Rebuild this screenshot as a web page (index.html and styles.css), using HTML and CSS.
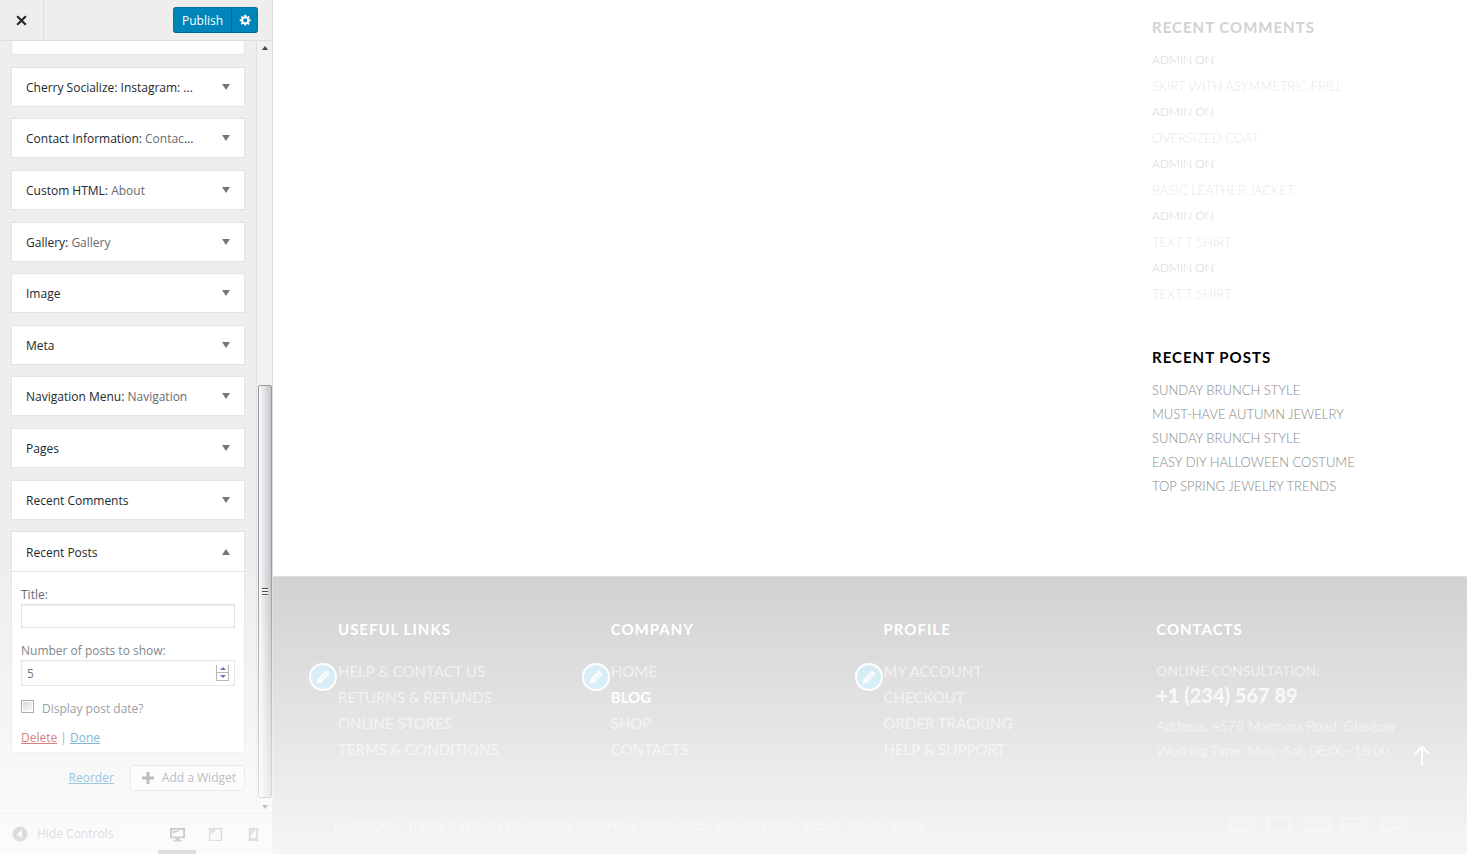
FILE: index.html
```
<!DOCTYPE html>
<html lang="en">
<head>
<meta charset="utf-8">
<title>Customize: Widgets</title>
<link rel="stylesheet" href="styles.css">
</head>
<body>
<svg class="defs" aria-hidden="true">
  <symbol id="pencil" viewBox="0 0 20 20"><path fill="currentColor" d="M13.9 3.4l2.8 2.8c.4.4.4.9 0 1.300l-8.500 8.500-4.900 1 .9-4.900 8.500-8.700c.4-.4.8-.4 1.200 0z"/><path fill="none" stroke="#c6e6f4" stroke-width="1" d="M6.500 12.500l6-6M8 14l6-6M11.800 5.200l3 3"/></symbol>
</svg>
<div class="app">
  <aside class="controls">
    <header class="controls-head">
      <button class="close" aria-label="Close"><svg viewBox="0 0 12 12"><path d="M2 2l8 8M10 2l-8 8"/></svg></button>
      <div class="publish">
        <button class="publish-main">Publish</button>
        <button class="publish-gear" aria-label="Publish settings"><svg viewBox="0 0 20 20"><path fill-rule="evenodd" d="M18 12h-2.200c-.1.500-.3.900-.6 1.300l1.600 1.600-2.100 2.100-1.600-1.600c-.4.200-.8.400-1.300.5V18H8.800v-2.200c-.500-.1-.9-.3-1.300-.5l-1.600 1.600-2.100-2.100 1.600-1.600c-.2-.4-.4-.8-.5-1.300H2.500V9h2.400c.1-.500.3-.9.500-1.300L3.800 6.100 5.900 4l1.600 1.600c.4-.2.8-.4 1.300-.5V2.500h3v2.600c.500.1.9.3 1.300.5L14.700 4l2.100 2.100-1.600 1.600c.2.4.4.8.5 1.300H18zM10.300 13.500a3 3 0 1 0 0-6 3 3 0 0 0 0 6z"/></svg></button>
      </div>
    </header>
    <div class="controls-body">
      <div class="widgets">
        <div class="widget-cut"></div>
        <button class="widget"><span class="name">Cherry Socialize: Instagram: ...</span><i class="caret"></i></button>
        <button class="widget"><span class="name">Contact Information: <span class="sub">Contac</span>...</span><i class="caret"></i></button>
        <button class="widget"><span class="name">Custom HTML: <span class="sub">About</span></span><i class="caret"></i></button>
        <button class="widget"><span class="name">Gallery: <span class="sub">Gallery</span></span><i class="caret"></i></button>
        <button class="widget"><span class="name">Image</span><i class="caret"></i></button>
        <button class="widget"><span class="name">Meta</span><i class="caret"></i></button>
        <button class="widget"><span class="name">Navigation Menu: <span class="sub">Navigation</span></span><i class="caret"></i></button>
        <button class="widget"><span class="name">Pages</span><i class="caret"></i></button>
        <button class="widget"><span class="name">Recent Comments</span><i class="caret"></i></button>
        <section class="widget-open">
          <button class="widget"><span class="name">Recent Posts</span><i class="caret up"></i></button>
          <form class="widget-form">
            <label for="title">Title:</label>
            <input class="field" id="title" type="text">
            <label for="count" class="spaced">Number of posts to show:</label>
            <div class="number">
              <input class="field" id="count" type="text" inputmode="numeric" value="5">
              <span class="spinner"><button type="button" aria-label="Increase"><i></i></button><button type="button" aria-label="Decrease"><i class="down"></i></button></span>
            </div>
            <div class="check"><input type="checkbox" id="date"><label for="date">Display post date?</label></div>
            <p class="links"><a class="delete" href="#">Delete</a> | <a href="#">Done</a></p>
          </form>
        </section>
        <div class="actions">
          <a href="#">Reorder</a>
          <button class="add"><svg viewBox="0 0 12 12"><path d="M6 0v12M0 6h12"/></svg>Add a Widget</button>
        </div>
      </div>
      <div class="scrollbar" aria-hidden="true"><i class="arrow"></i><div class="thumb"><span></span></div><i class="arrow down"></i></div>
    </div>
    <footer class="controls-foot">
      <button class="hide"><svg viewBox="0 0 16 16"><circle cx="8" cy="8" r="7.500"/><path d="M10 4v8L4.500 8z"/></svg>Hide Controls</button>
      <div class="devices">
        <button class="active" aria-label="Desktop"><svg viewBox="0 0 16 16"><path fill-rule="evenodd" d="M0 1h16v11H10v2h3v1.500H3V14h3v-2H0zM2 3v7h12V3z"/><path d="M3 4h8L3 7z"/></svg></button>
        <button aria-label="Tablet"><svg viewBox="0 0 16 16"><path fill-rule="evenodd" d="M1 1h14v14H1zM2.500 2.500v11h11v-11z"/><path d="M3 3h6L3 8z"/></svg></button>
        <button aria-label="Mobile"><svg viewBox="0 0 16 16"><path fill-rule="evenodd" d="M3 1h10v14H3zM5 3v9h6V3z"/><path d="M5.500 3.500h4L5.500 9z"/></svg></button>
      </div>
    </footer>
  </aside>

  <main class="preview">
    <div class="page">
      <div class="side">
        <section class="comments">
          <h2>Recent Comments</h2>
          <ul>
            <li>Admin on <a href="#">Skirt with asymmetric frill</a></li>
            <li>Admin on <a href="#">Oversized coat</a></li>
            <li>Admin on <a href="#">Basic leather jacket</a></li>
            <li>Admin on <a href="#">Text T Shirt</a></li>
            <li>Admin on <a href="#">Text T Shirt</a></li>
          </ul>
        </section>
        <section class="posts">
          <h2>Recent Posts</h2>
          <ul>
            <li><a href="#">Sunday brunch style</a></li>
            <li><a href="#">Must-have autumn jewelry</a></li>
            <li><a href="#">Sunday brunch style</a></li>
            <li><a href="#">Easy DIY Halloween costume</a></li>
            <li><a href="#">Top spring jewelry trends</a></li>
          </ul>
        </section>
      </div>
    </div>
    <footer class="site-foot">
      <div class="columns">
        <section>
          <h2>Useful links</h2>
          <nav><button class="edit" aria-label="Edit menu"><svg><use href="#pencil"/></svg></button>
            <a href="#">Help &amp; Contact us</a><a href="#">Returns &amp; Refunds</a><a href="#">Online stores</a><a href="#">Terms &amp; Conditions</a></nav>
        </section>
        <section>
          <h2>Company</h2>
          <nav><button class="edit" aria-label="Edit menu"><svg><use href="#pencil"/></svg></button>
            <a href="#">Home</a><a href="#" class="current">Blog</a><a href="#">Shop</a><a href="#">Contacts</a></nav>
        </section>
        <section>
          <h2>Profile</h2>
          <nav><button class="edit" aria-label="Edit menu"><svg><use href="#pencil"/></svg></button>
            <a href="#">My account</a><a href="#">Checkout</a><a href="#">Order tracking</a><a href="#">Help &amp; Support</a></nav>
        </section>
        <section>
          <h2>Contacts</h2>
          <p class="consult">Online consultation:</p>
          <p class="phone">+1 (234) 567 89</p>
          <p class="info">Address: 4578 Marmora Road, Glasgow</p>
          <p class="info">Working Time: Mon–Sat: 08:00–18:00</p>
        </section>
      </div>
      <div class="legal">
        <p>LovetoDress Theme is proudly powered by WordPress Entries (RSS) and Comments (RSS) © Privacy Policy.</p>
        <div class="cards">
          <svg viewBox="0 0 28 18"><rect width="28" height="18" rx="1"/><text x="14" y="13" text-anchor="middle">VISA</text></svg>
          <svg viewBox="0 0 28 18"><rect width="28" height="18" rx="1"/><circle cx="10" cy="9" r="6"/><circle cx="18" cy="9" r="6"/></svg>
          <svg viewBox="0 0 28 18"><rect width="28" height="18" rx="1"/><text class="small" x="14" y="12" text-anchor="middle">PayPal</text></svg>
          <svg viewBox="0 0 28 18"><rect width="28" height="18" rx="1"/><path d="M3 4h22l-5 3H3z"/></svg>
          <svg viewBox="0 0 28 18"><rect width="28" height="18" rx="1"/><path d="M26 10v6H14q8-2 12-6zM3 8h20v2H3z"/></svg>
        </div>
      </div>
      <a class="to-top" href="#" aria-label="Back to top"><svg viewBox="0 0 16 20"><path d="M8 20V1M1 8l7-7 7 7"/></svg></a>
    </footer>
  </main>
</div>
</body>
</html>
```
FILE: styles.css
```
* { box-sizing: border-box; }
body, h2, p, ul { margin: 0; padding: 0; }
ul { list-style: none; }
button { margin: 0; padding: 0; border: 0; background: none; color: inherit; font: inherit; cursor: pointer; }
svg { display: block; fill: currentColor; }
.defs { position: absolute; width: 0; height: 0; }

.app { display: flex; min-height: 100vh; background: #fff; }
.app::after {
  content: "";
  position: absolute;
  inset: 0;
  background: linear-gradient(rgba(255,255,255,0) 66%, rgba(255,255,255,.8) 100%);
  pointer-events: none;
}

/* Customizer panel */
.controls {
  display: flex;
  flex-direction: column;
  flex: none;
  width: 273px;
  border-right: 1px solid #ddd;
  background: #eee;
  color: #555d66;
  font: 12px/18px "Open Sans", "Noto Sans", sans-serif;
}
.controls a { color: #0073aa; }
.controls-head { display: flex; justify-content: space-between; align-items: center; height: 41px; padding-right: 14px; border-bottom: 1px solid #ddd; }
.close { display: flex; align-items: center; justify-content: center; align-self: stretch; width: 44px; border-right: 1px solid #ddd; }
.close svg { width: 13px; height: 13px; fill: none; stroke: #23282d; stroke-width: 2; }
.publish { display: flex; height: 26px; border: 1px solid #0073aa; border-bottom-color: #006799; border-radius: 3px; background: #0085ba; color: #fff; }
.publish-main { width: 57px; padding-top: 2px; }
.publish-gear { display: flex; align-items: center; justify-content: center; width: 26px; border-left: 1px solid #006799; }
.publish-gear svg { width: 14px; height: 14px; }

.controls-body { display: flex; flex: 1; }
.widgets { display: flex; flex: 1; flex-direction: column; justify-content: space-between; padding: 0 11px 22px; }
.widget-cut { height: 14px; border: 1px solid #e5e5e5; border-top: 0; background: #fff; }
.widget { display: flex; align-items: center; justify-content: space-between; width: 100%; height: 40px; padding: 0 14px; border: 1px solid #e3e3e3; background: #fff; color: #23282d; font-weight: 500; text-align: left; }
.name { padding-top: 2px; white-space: nowrap; }
.sub { color: #666b70; font-weight: 400; }
.caret { border: 4px solid transparent; border-top: 6px solid #72777c; border-bottom: 0; }
.caret.up { border-top: 0; border-bottom: 6px solid #72777c; }
.widget-open { height: 222px; border: 1px solid #e3e3e3; background: #fff; }
.widget-open .widget { border-width: 0 0 1px; }
.widget-form { padding: 14px 9px 0; }
.widget-form label { display: block; }
.widget-form .spaced { margin-top: 14px; }
.field { display: block; width: 100%; height: 24px; padding: 0 5px; border: 1px solid #ddd; background: #fff; color: #32373c; font: inherit; box-shadow: inset 0 1px 2px rgba(0,0,0,.07); }
.number { display: flex; align-items: center; border: 1px solid #ddd; }
.number .field { border: 0; }
.spinner { display: flex; flex-direction: column; width: 14px; height: 16px; margin-right: 5px; border: 1px solid #999; border-top: 0; }
.spinner button { display: flex; flex: 1; align-items: center; justify-content: center; }
.spinner button + button { border-top: 1px solid #999; }
.spinner i { border: 3px solid transparent; border-top: 0; border-bottom: 3px solid #339; }
.spinner i.down { border-bottom: 0; border-top: 3px solid #339; }
.check { display: flex; align-items: flex-start; gap: 8px; margin-top: 14px; }
.check input { appearance: none; width: 13px; height: 13px; margin: 0; border: 1px solid #777; background: linear-gradient(135deg, #bbb, #fff); box-shadow: inset 0 0 0 1px #fff; }
.links { margin-top: 11px; }
.links .delete { color: #a00; }
.actions { display: flex; align-items: center; justify-content: flex-end; gap: 16px; }
.add { display: flex; align-items: center; gap: 8px; height: 26px; padding: 0 8px 0 11px; border: 1px solid #ccc; border-radius: 3px; background: #f7f7f7; }
.add svg { width: 12px; height: 12px; stroke: currentColor; stroke-width: 3; }

.scrollbar { display: flex; flex-direction: column; align-items: center; width: 16px; padding: 5px 1px 4px; border-left: 1px solid #e2e2e2; background: #f1f1f1; }
.arrow { border: 3px solid transparent; border-top: 0; border-bottom: 4px solid #444; }
.arrow.down { border-bottom: 0; border-top: 4px solid #444; }
.thumb { display: flex; align-items: center; justify-content: center; width: 14px; height: 413px; margin: auto 0 7px; border: 1px solid #999; border-radius: 2px; background: linear-gradient(90deg, #fafafa, #e2e2e6 45%, #c4c4ca); }
.thumb span { width: 6px; height: 8px; background: repeating-linear-gradient(#444 0 1px, #eee 1px 3px); }

.controls-foot { display: flex; justify-content: space-between; height: 41px; padding-left: 12px; border-top: 1px solid #ddd; }
.hide { display: flex; align-items: center; gap: 9px; color: #72777c; }
.hide svg { width: 16px; height: 16px; }
.hide path { fill: #eee; }
.devices { display: flex; color: #72777c; }
.devices button { display: flex; align-items: center; justify-content: center; width: 38px; border-bottom: 4px solid transparent; padding-top: 4px; }
.devices .active { border-color: #555d66; color: #32373c; }
.devices svg { width: 15px; height: 15px; }

/* Previewed site */
.preview { display: flex; flex: 1; flex-direction: column; padding-right: 4px; font-family: Lato, sans-serif; }
.preview a { color: inherit; text-decoration: none; }
.preview h2 { font-size: 15px; line-height: 20px; font-weight: 700; letter-spacing: 1px; text-transform: uppercase; }
.page { display: flex; flex: 1; justify-content: flex-end; padding-top: 17px; }
.side { width: 315px; text-transform: uppercase; }
.comments h2 { color: #d2d2d2; }
.comments ul { margin: 10px 0 40px; color: #d4d4d4; font-size: 12px; line-height: 26px; font-weight: 300; }
.comments a { display: block; color: #e8e8e8; font-size: 13px; }
.posts h2 { color: #000; }
.posts ul { margin-top: 11px; color: #888; font-size: 13px; line-height: 24px; font-weight: 300; }

.site-foot { position: relative; height: 278px; padding-top: 42px; border-top: 1px solid #e0e0e0; background: #d0d0d0; color: #fff; }
.columns { display: grid; grid-template-columns: repeat(4, 1fr); padding: 0 38px 0 65px; }
.columns nav, .columns .consult { margin-top: 19px; }
.columns nav { position: relative; color: #ebebeb; font-size: 15px; line-height: 26px; text-transform: uppercase; }
.columns nav > a { display: block; }
.columns .current { color: #fff; font-weight: 700; }
.edit { position: absolute; left: -29px; top: 5px; display: flex; align-items: center; justify-content: center; width: 28px; height: 28px; border: 2px solid #fff; border-radius: 50%; background: #c6e6f4; color: #fff; }
.edit svg { width: 18px; height: 18px; }
.consult { color: #ebebeb; font-size: 14px; line-height: 26px; text-transform: uppercase; }
.phone { margin-bottom: 6px; color: #f4f4f4; font-size: 20px; line-height: 23px; font-weight: 900; }
.info { color: #f4f4f4; font-size: 14px; line-height: 25px; font-weight: 300; white-space: nowrap; }
.legal { display: flex; align-items: center; justify-content: space-between; margin-top: 53px; padding: 0 60px 0 61px; color: #f7f7f7; font-size: 13px; line-height: 18px; font-weight: 300; }
.cards { display: flex; gap: 10px; }
.cards svg { width: 28px; height: 18px; fill: #dadada; }
.cards text, .cards circle, .cards path { fill: #cecece; font: italic 700 10px Lato, sans-serif; }
.cards .small { font-size: 8px; }
.to-top { position: absolute; right: 37px; bottom: 88px; }
.to-top svg { width: 16px; height: 20px; fill: none; stroke: #fff; stroke-width: 2; }
```
